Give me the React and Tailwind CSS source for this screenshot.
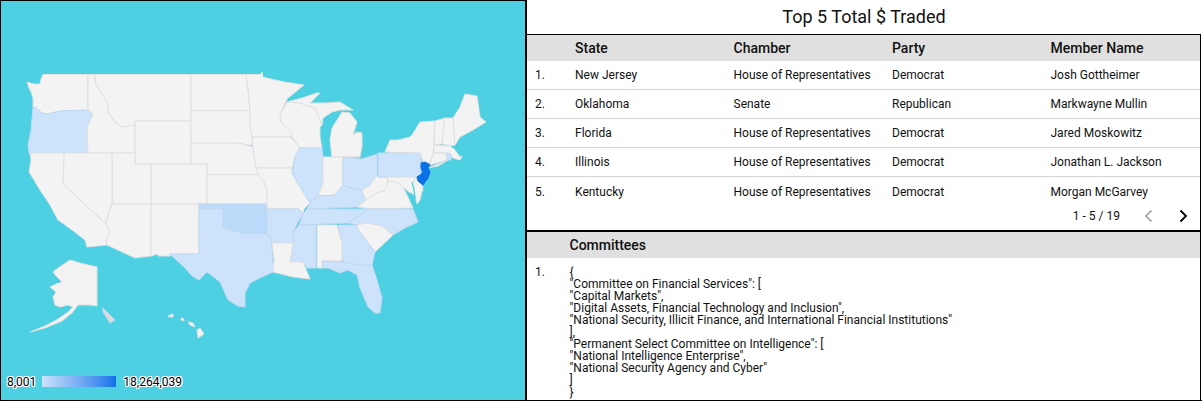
import React from 'react';

const font = { fontFamily: 'Roboto, sans-serif' };

const base = '#f3f3f3';
const low = '#cce3fb';
const mid = '#bbdafa';
const top = '#0a72e6';

// state outlines traced in page pixels
const states = [
  ['WA', base, '27,82 34,84 40,84 41,79 43,74.5 88,74.5 88,110 60,111 47,114 42,113 36,108 33,107 33,98 31,92 29,88'],
  ['OR', low, '33,107 36,108 42,113 47,114 60,111 88,110 93,114 87,128 88,153 29,153.5 28,145 31,130'],
  ['ID', base, '88,74.5 95,74.5 96,85 108,103 108,112 115,122 122,127 135,125 135,153 88,153 87,128 93,114 88,110'],
  ['MT', base, '95,74.5 191,74.5 191,121 135,121 135,125 122,127 115,122 108,112 108,103 96,85'],
  ['WY', base, '135,121 191,121 191,164 135,164'],
  ['ND', base, '191,74.5 246,74.5 248,90 250,110.5 191,110.5'],
  ['SD', base, '191,110.5 250,110.5 250,125 252,137 253,145 247,145 238,143 191,143'],
  ['NE', base, '191,143 238,143 247,145 253,147 255,160 258,174.5 207,174.5 207,164 191,164'],
  ['CO', base, '151,164 207,164 207,204 151,204'],
  ['UT', base, '112,153 135,153 135,164 151,164 151,204 112,204'],
  ['NV', base, '64,153 112,153 112,204 109,212 106,224 63,184'],
  ['CA', base, '30,153 64,153 63,184 106,224 110,231 106,240 107,245 87,247 85,240 72,230 58,220 50,205 44,196 40,190 34,180 29,172 31,160'],
  ['AZ', base, '112,204 151,204 151,256 135,258 107,245 106,240 110,231 106,224 109,212'],
  ['NM', base, '151,204 199,204 199,254 170,254 171,256 158,256 158,254 151,256'],
  ['KS', base, '207,174.5 258,174.5 264,182 267,190 267,204 207,204'],
  ['OK', mid, '199,204 267,204 267,235 260,233 247,234 223,228 223,209 199,209'],
  ['TX', low, '199,209 223,209 223,228 247,234 260,233 267,235 271,237 273,262 274,270 273,272 260,278 250,283 245,293 245,307 238,306 228,300 220,282 207,272 199,280 192,276 185,268 170,254 199,254'],
  ['MN', base, '246,74.5 261,74.5 262,72 263,77 275,80 285,82 304,85 287,99 280,115 281,122 292,133 292,137 252,137 250,125 250,110.5 248,90'],
  ['IA', base, '252,137 291,137 300,148 295,157 292,168 256,168 253,147'],
  ['MO', base, '256,168 292,168 293,175 302,190 310,203 304,209 303,214 299,209 267,209 267,190 264,182 258,174.5'],
  ['WI', base, '280,115 287,102 300,103 315,108 322,125 320,127 320,137 322,148 300,148 292,137 292,133 281,122'],
  ['MI', base, '287,102 302,98 317,93 320,93 310,103 325,103 340,102 353,110 340,110 332,112 323,118 322,125 315,108 300,103'],
  ['MI2', base, '332,157 330,140 332,128 342,112 350,113 357,122 353,135 357,132 362,133 362,147 360,157'],
  ['IL', low, '300,148 322,148 323,157 323,183 318,196 310,203 302,190 292,173 295,157'],
  ['IN', base, '323,157 343,157 343,185 335,195 318,196 323,183'],
  ['OH', low, '343,157 362,159 377,154 377,175 370,185 362,190 350,188 343,185'],
  ['KY', low, '310,203 318,196 335,195 343,185 350,188 362,190 366,200 357,207 307,209'],
  ['WV', base, '362,190 370,185 377,175 378,177 387,177 388,182 395,180 385,190 377,193 366,200'],
  ['VA', base, '357,207 366,200 377,193 385,190 388,181 397,182 403,187 408,197 413,208 370,209'],
  ['PA', low, '378,153 420,153 422,165 420,177 378,177'],
  ['MD', base, '387,177 417,177 421,187 423,190 419,197 409,192 403,187 397,182 388,181'],
  ['DM', base, '414,178 417,178 423,187 420,200 417,204 414,192'],
  ['NY', base, '385,152 390,140 398,140 410,137 412,135 420,122 435,121 433,157 430,163 423,162 420,153'],
  ['LI', base, '428,168 438,164 448,160 438,166'],
  ['VT', base, '435,121 445,118 442,144 434,145'],
  ['NH', base, '445,118 453,118 455,145 450,146 442,144'],
  ['ME', base, '453,118 460,107 465,94 477,96 480,117 486,122 473,130 460,137 455,145'],
  ['MA', base, '434,145 450,146 455,150 460,157 462,156 460,160 453,158 447,153 434,153'],
  ['CT', base, '433,153 447,153 447,160 430,165'],
  ['RI', low, '447,153 451,154 451,160 447,160'],
  ['NJ', top, '421,163 425,162 430,165 428,168 430,172 428,178 423,185 418,181 417,177 423,173 421,168'],
  ['TN', low, '307,209 370,209 360,215 348,223 299,225 303,214'],
  ['NC', low, '370,209 413,209 418,222 405,228 393,235 382,226 367,223 357,225 348,223 360,215'],
  ['SC', base, '357,225 367,223 382,226 393,235 375,252 358,230'],
  ['GA', low, '338,225 357,225 358,230 375,252 372,265 368,266 343,265 342,243'],
  ['AL', base, '317,225 337,225 342,243 342,261 322,261 323,268 317,268'],
  ['MS', low, '299,225 316,225 316,268 307,268 303,262 290,262 293,243 293,233'],
  ['AR', low, '267,209 299,209 303,214 298,222 293,233 293,243 271,243 271,237 267,235'],
  ['LA', base, '272,243 293,243 290,262 303,262 310,279 293,277 273,272 274,260'],
  ['FL', low, '322,261 342,262 368,266 372,265 377,280 382,298 380,313 375,313 368,307 360,288 357,275 348,270 340,273 328,268 323,268'],
  ['AK', base, '53,272 58,268 70,260 80,263 97,267 97,306 90,305 78,305 72,313 62,321 45,328 30,332 45,326 58,319 68,312 73,307 68,305 60,307 55,305 53,297 56,292 50,287 56,284 62,282 56,276'],
  ['AK2', '#dcdcdc', '103,308 115,320 110,323 103,312'],
  ['HI', base, '197,330 200,328 204,334 198,338'],
  ['HI2', base, '168,316 173,314 173,317 169,317'],
  ['HI3', base, '181,318 184,319 184,321 181,320'],
  ['HI4', base, '188,322 193,323 195,327 190,325'],
];

const rows = [
  ['New Jersey', 'House of Representatives', 'Democrat', 'Josh Gottheimer'],
  ['Oklahoma', 'Senate', 'Republican', 'Markwayne Mullin'],
  ['Florida', 'House of Representatives', 'Democrat', 'Jared Moskowitz'],
  ['Illinois', 'House of Representatives', 'Democrat', 'Jonathan L. Jackson'],
  ['Kentucky', 'House of Representatives', 'Democrat', 'Morgan McGarvey'],
];

const committees = [
  '{',
  '"Committee on Financial Services": [',
  '"Capital Markets",',
  '"Digital Assets, Financial Technology and Inclusion",',
  '"National Security, Illicit Finance, and International Financial Institutions"',
  '],',
  '"Permanent Select Committee on Intelligence": [',
  '"National Intelligence Enterprise",',
  '"National Security Agency and Cyber"',
  ']',
  '}',
];

const halo = '[text-shadow:1px_0_0_#fff,-1px_0_0_#fff,0_1px_0_#fff,0_-1px_0_#fff,1px_1px_0_#fff,-1px_-1px_0_#fff,1px_-1px_0_#fff,-1px_1px_0_#fff]';

const UsMap = () => (
  <svg viewBox="1 1 524 399" className="w-full h-full block">
    {states.map(([id, fill, points]) => (
      <polygon
        key={id}
        points={points}
        fill={fill}
        stroke={fill === base ? '#e0e0e0' : fill === top ? top : '#c0d8f2'}
        strokeWidth="1"
        strokeLinejoin="round"
      />
    ))}
    {/* chesapeake */}
    <polyline points="412,182 414,190 415,197 414,204" fill="none" stroke="#4dd0e1" strokeWidth="1.2" />
  </svg>
);

export default function App() {
  return (
    <div style={font} className="w-[1202px] h-[401px] flex bg-white text-[#111] border-b border-black overflow-hidden">
      <div className="relative w-[527px] h-full shrink-0 bg-[#4dd0e1] border-l border-t border-r-2 border-black">
        <UsMap />
        <div className="absolute left-[6px] top-[373px] h-[15px] flex items-center text-xs text-black">
          <span className={halo}>8,001</span>
          <div className="ml-[6px] w-[74px] h-[11px] bg-gradient-to-r from-[#cce3fb] to-[#0a72e6]" />
          <span className={`ml-[7px] ${halo}`}>18,264,039</span>
        </div>
      </div>

      <div className="flex-1 min-w-0 flex flex-col pr-px">
        <div className="h-[34px] shrink-0 flex items-center justify-center text-lg border-b border-black box-content">
          Top 5 Total $ Traded
        </div>

        <div className="flex-1 min-h-0 flex flex-col border-r border-black">
          <div className="h-[26px] shrink-0 bg-[#e0e0e0] grid grid-cols-[48px_158.5px_158.5px_158.5px_1fr] items-center text-sm font-medium">
            <span />
            <span>State</span>
            <span>Chamber</span>
            <span>Party</span>
            <span>Member Name</span>
          </div>

          {rows.map((row, i) => (
            <div
              key={row[0]}
              className={`h-[29px] shrink-0 grid grid-cols-[48px_158.5px_158.5px_158.5px_1fr] items-center text-xs ${i < 4 ? 'border-b border-[#d4d4d4]' : ''}`}
            >
              <span className="pl-2">{i + 1}.</span>
              {row.map((cell) => (
                <span key={cell}>{cell}</span>
              ))}
            </div>
          ))}

          <div className="h-[20px] mb-[4px] shrink-0 flex items-center justify-end text-xs">
            <span>1 - 5 / 19</span>
            <svg width="12" height="14" viewBox="0 0 12 14" className="ml-[23px]" fill="none" stroke="#9e9e9e" strokeWidth="1.6">
              <path d="M8.5 1.5 3 7l5.5 5.5" />
            </svg>
            <svg width="12" height="14" viewBox="0 0 12 14" className="ml-[22px] mr-[11px]" fill="none" stroke="#000" strokeWidth="1.8">
              <path d="M3.5 1.5 9 7l-5.5 5.5" />
            </svg>
          </div>

          <div className="border-t-2 border-black flex-1 min-h-0">
            <div className="h-[26px] bg-[#e0e0e0] flex items-center pl-[42.5px] text-sm font-medium">Committees</div>
            <div className="flex text-xs leading-3 pt-2">
              <span className="w-[42.5px] pl-2">1.</span>
              <div className="whitespace-nowrap">
                {committees.map((line, i) => (
                  <div key={i}>{line}</div>
                ))}
              </div>
            </div>
          </div>
        </div>
      </div>
    </div>
  );
}
